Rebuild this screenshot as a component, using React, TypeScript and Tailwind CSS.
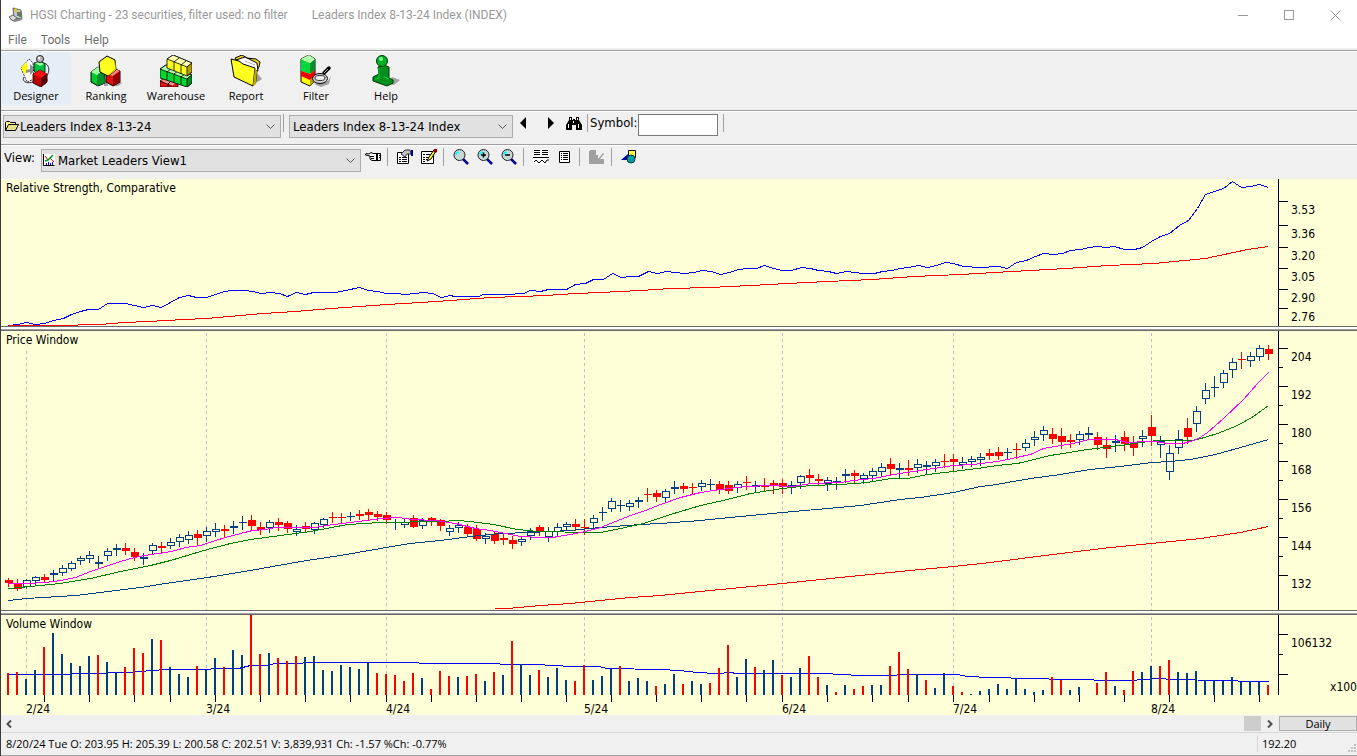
import type { ReactNode } from 'react';

type Candle = [high: number, top: number, bottom: number, low: number, color: 'r' | 'b'];
type Tick = { y: number; label?: string; short?: boolean };

const RED = '#ff0000';
const NAVY = '#004080';
const PAPER = '#ffffd7';

const PLOT_LEFT = 1;
const PLOT_WIDTH = 1277;

// candle n sits at x = 8 + 9n
const barX = (index: number) => 8 + index * 9;

const candles: Candle[] = [
  [578, 580, 583, 587, 'r'], [579, 584, 589, 591, 'r'], [579, 580, 587, 589, 'b'], [576, 577, 581, 585, 'b'],
  [574, 577, 580, 583, 'r'], [570, 573, 575, 582, 'b'], [565, 568, 573, 576, 'b'], [561, 563, 569, 571, 'b'],
  [556, 558, 561, 565, 'b'], [551, 555, 559, 563, 'b'], [556, 562, 564, 568, 'b'], [548, 551, 556, 561, 'b'],
  [544, 548, 550, 556, 'b'], [543, 548, 551, 555, 'r'], [548, 552, 557, 561, 'r'], [553, 557, 559, 565, 'b'],
  [543, 545, 551, 555, 'b'], [542, 546, 548, 554, 'r'], [538, 542, 546, 549, 'b'], [534, 537, 542, 547, 'b'],
  [531, 535, 540, 544, 'b'], [530, 534, 538, 545, 'r'], [527, 531, 536, 542, 'b'], [523, 529, 532, 537, 'b'],
  [525, 529, 531, 537, 'r'], [521, 526, 528, 534, 'b'], [516, 522, 523, 530, 'b'], [515, 520, 526, 530, 'r'],
  [522, 527, 530, 535, 'r'], [520, 522, 528, 533, 'b'], [518, 522, 525, 531, 'r'], [521, 523, 529, 533, 'r'],
  [525, 529, 532, 536, 'b'], [522, 526, 529, 533, 'r'], [522, 523, 530, 534, 'b'], [518, 519, 525, 528, 'b'],
  [512, 517, 518, 523, 'r'], [513, 517, 518, 523, 'r'], [512, 516, 517, 521, 'b'], [510, 514, 516, 520, 'r'],
  [509, 512, 515, 520, 'r'], [511, 514, 517, 521, 'r'], [512, 515, 520, 524, 'r'], [519, 522, 523, 530, 'b'],
  [519, 522, 525, 528, 'b'], [515, 518, 527, 528, 'r'], [518, 520, 526, 529, 'b'], [517, 518, 521, 526, 'r'],
  [519, 520, 526, 531, 'r'], [525, 528, 532, 536, 'b'], [522, 525, 528, 533, 'b'], [524, 527, 534, 537, 'r'],
  [525, 529, 539, 541, 'r'], [533, 536, 539, 544, 'b'], [532, 534, 541, 544, 'r'], [533, 538, 540, 545, 'r'],
  [536, 540, 544, 549, 'r'], [536, 539, 542, 546, 'b'], [528, 531, 536, 540, 'b'], [525, 527, 531, 536, 'r'],
  [527, 531, 537, 542, 'b'], [523, 527, 532, 536, 'b'], [522, 524, 527, 531, 'b'], [519, 524, 527, 531, 'r'],
  [519, 527, 528, 535, 'r'], [515, 518, 523, 529, 'b'], [507, 512, 513, 521, 'b'], [498, 501, 509, 512, 'b'],
  [500, 505, 506, 512, 'b'], [500, 503, 507, 511, 'b'], [497, 500, 502, 508, 'b'], [488, 494, 495, 502, 'r'],
  [490, 493, 497, 502, 'r'], [489, 491, 498, 502, 'b'], [481, 487, 489, 494, 'b'], [483, 486, 489, 493, 'r'],
  [483, 487, 488, 494, 'r'], [480, 483, 487, 491, 'b'], [479, 484, 485, 490, 'b'], [481, 484, 490, 494, 'r'],
  [481, 485, 491, 494, 'r'], [481, 484, 488, 493, 'b'], [476, 482, 483, 490, 'r'], [481, 485, 487, 492, 'b'],
  [478, 486, 487, 492, 'r'], [480, 483, 486, 494, 'r'], [479, 483, 487, 494, 'r'], [481, 485, 487, 494, 'b'],
  [475, 476, 483, 489, 'b'], [469, 475, 478, 483, 'r'], [474, 479, 481, 486, 'r'], [477, 480, 484, 491, 'b'],
  [477, 481, 482, 490, 'b'], [469, 474, 476, 483, 'b'], [470, 473, 476, 483, 'r'], [473, 475, 479, 484, 'b'],
  [468, 471, 476, 482, 'b'], [463, 467, 472, 476, 'b'], [458, 464, 469, 475, 'r'], [463, 468, 470, 478, 'b'],
  [460, 468, 470, 476, 'r'], [459, 464, 468, 473, 'b'], [461, 465, 467, 474, 'b'], [459, 462, 466, 472, 'b'],
  [454, 461, 462, 468, 'r'], [454, 459, 462, 472, 'r'], [457, 462, 465, 469, 'b'], [456, 459, 462, 467, 'b'],
  [453, 457, 460, 466, 'b'], [449, 453, 456, 460, 'r'], [447, 452, 456, 460, 'r'], [448, 452, 453, 460, 'b'],
  [443, 449, 450, 459, 'r'], [439, 443, 448, 451, 'b'], [431, 437, 440, 446, 'b'], [426, 430, 435, 441, 'b'],
  [428, 434, 439, 444, 'r'], [428, 436, 442, 449, 'r'], [434, 440, 442, 448, 'r'], [431, 434, 440, 445, 'b'],
  [427, 433, 435, 439, 'b'], [432, 437, 445, 450, 'r'], [437, 445, 449, 458, 'r'], [435, 441, 443, 452, 'b'],
  [431, 437, 444, 451, 'r'], [436, 443, 448, 456, 'r'], [430, 436, 439, 447, 'b'], [415, 427, 436, 446, 'r'],
  [436, 441, 445, 458, 'b'], [445, 453, 472, 480, 'b'], [430, 439, 448, 454, 'b'], [418, 428, 437, 444, 'r'],
  [406, 411, 424, 432, 'b'], [383, 390, 399, 404, 'b'], [376, 387, 388, 397, 'b'], [370, 373, 383, 388, 'b'],
  [358, 362, 370, 378, 'b'], [352, 359, 360, 369, 'r'], [352, 356, 361, 367, 'b'], [345, 348, 357, 361, 'b'],
  [345, 349, 354, 360, 'r'],
];

const volumeTops = [
  673, 672, 679, 670, 647, 631, 654, 663, 666, 656, 655, 662, 672, 667, 648, 653, 639, 640, 667, 674,
  677, 666, 670, 658, 667, 650, 655, 615, 654, 653, 658, 661, 656, 657, 656, 670, 671, 665, 667, 669,
  663, 673, 674, 675, 681, 673, 678, 689, 671, 676, 677, 676, 674, 681, 672, 675, 641, 664, 675, 670,
  677, 668, 680, 681, 665, 680, 676, 669, 666, 681, 678, 681, 686, 684, 674, 684, 681, 684, 683, 668,
  645, 677, 659, 667, 670, 660, 675, 677, 668, 656, 677, 685, 692, 685, 689, 686, 685, 685, 666, 652,
  669, 674, 680, 688, 673, 686, 692, 694, 691, 689, 684, 689, 678, 689, 692, 690, 677, 680, 690, 687,
  695, 683, 672, 686, 690, 671, 672, 666, 666, 660, 672, 673, 671, 680, 680, 681, 677, 682, 681, 682,
  685,
];

// one letter per volume bar: r = down day, b = up day
const volumeColors =
  'rrbbrbbbbbrbbrrrbrbb' +
  'brbbrbbrrbrrrbbbbbbb' +
  'brrrrrbrrrbrrbrbrbbr' +
  'bbbrrbbbrbbbrbbrbbrr' +
  'rbbrbbrbbrrbrbrrbbrr' +
  'rbrbbrrbbbbbbbbbrrbb' +
  'brrbrrbbrrbbbbbbbbbb' +
  'r';

const strengthLine =
  '8,325 17,324 26,322 35,324 44,323 53,320 63,318 71,314 80,311 88,309 98,309 107,303 125,303 134,305 143,307 152,305 161,307 170,302 179,297 188,295 196,297 206,297 215,294 224,291 231,290 245,290 252,291 261,293 270,292 279,293 287,296 296,292 305,294 313,292 335,292 345,290 359,287 368,290 377,291 386,293 395,293 405,294 414,293 423,292 432,293 441,297 450,295 454,296 478,296 483,294 507,294 523,293 530,290 540,291 548,289 566,289 575,284 585,283 593,279 603,279 612,273 621,277 630,276 638,276 648,271 657,273 666,271 675,272 684,273 693,272 702,270 711,271 720,274 729,272 738,269 747,268 756,268 764,265 773,268 782,270 791,270 801,267 810,268 818,270 828,271 836,273 846,271 855,272 862,273 874,273 882,271 891,270 900,268 908,267 918,265 927,267 936,265 945,262 953,263 963,266 980,267 998,266 1007,268 1016,262 1026,260 1035,256 1043,253 1053,254 1062,253 1070,250 1080,249 1089,247 1097,246 1106,247 1114,246 1124,249 1134,249 1142,247 1151,241 1160,236 1169,233 1179,225 1188,220 1197,208 1205,194 1214,191 1223,188 1232,181 1241,187 1250,186 1259,184 1268,187';
const strengthAverage =
  '8,325 56,325 100,324 124,322 148,321 184,319 206,318 240,315 262,313 295,311 330,308 359,306 386,304 420,302 450,300 490,297 520,296 545,295 575,293 600,292 640,290 670,288 710,287 750,285 787,283 827,281 872,279 900,277 913,276 960,274 1011,271 1066,268 1108,265 1153,263 1205,258 1233,252 1247,249 1268,246';
const fastAverage =
  '8,583 26,583 45,582 60,580 75,577 90,571 105,566 120,561 134,557 150,554 165,552 175,550 185,547 200,545 215,540 225,537 240,533 252,530 265,529 275,527 315,527 325,525 342,523 366,520 380,518 398,517 412,519 435,520 455,523 475,528 490,530 505,533 520,536 540,537 552,537 570,534 585,531 600,527 615,521 630,515 645,510 660,504 680,497 700,492 720,489 745,486 770,485 793,486 810,483 840,482 853,480 873,478 893,474 913,471 933,468 953,465 973,464 997,461 1007,459 1030,454 1043,448 1060,445 1073,443 1088,439 1115,439 1127,442 1147,441 1155,441 1167,443 1182,443 1190,441 1198,438 1207,432 1223,418 1243,399 1257,383 1268,372';
const mediumAverage =
  '8,588 30,586 60,583 90,578 120,571 150,565 170,560 190,554 207,549 230,543 250,539 280,535 310,531 347,524 380,522 440,521 457,520 470,521 493,524 517,529 537,531 590,532 600,532 620,528 643,523 670,514 700,505 727,499 750,493 782,488 810,485 840,484 867,482 890,478 907,478 927,474 953,471 977,468 997,465 1017,463 1050,455 1087,449 1120,445 1140,442 1157,440 1190,440 1197,439 1217,433 1237,425 1253,416 1268,405';
const slowAverage =
  '8,600 26,598 75,595 100,592 140,587 165,583 207,577 250,570 300,561 340,555 380,548 410,543 440,540 470,536 500,533 530,532 570,530 600,527 640,524 660,523 700,520 740,516 782,512 827,508 860,505 880,502 900,499 920,497 953,492 980,486 990,485 1030,478 1060,474 1090,469 1120,466 1151,462 1170,461 1190,459 1215,454 1240,447 1268,439';
const longAverage =
  '494,608 507,608 540,605 570,603 590,601 630,597 660,595 720,589 782,583 830,578 880,573 920,569 953,566 990,562 1060,553 1110,547 1151,543 1200,538 1240,532 1268,526';
const volumeAverage =
  '8,674 58,674 85,673 130,672 139,671 165,669 210,669 211,668 238,668 250,665 265,665 275,663 300,663 305,662 418,662 419,663 499,663 500,664 535,664 571,666 598,666 607,668 660,669 679,670 697,672 715,673 733,672 733,673 823,673 859,675 895,675 898,674 957,674 967,676 990,677 1030,678 1066,679 1120,680 1130,680 1156,678 1174,679 1219,680 1255,681 1268,681';

const months = [
  { x: 26, label: '2/24' },
  { x: 206, label: '3/24' },
  { x: 386, label: '4/24' },
  { x: 584, label: '5/24' },
  { x: 782, label: '6/24' },
  { x: 953, label: '7/24' },
  { x: 1151, label: '8/24' },
];

const weekTicks = [
  44, 89, 134, 170, 215, 260, 305, 350, 386, 431, 476, 521, 566, 611, 656, 701, 746, 782, 827, 872, 908, 953, 989,
  1034, 1079, 1124, 1169, 1214, 1259,
];

const strengthTicks: Tick[] = [
  { y: 201, label: '3.53' },
  { y: 225, label: '3.36' },
  { y: 247, label: '3.20' },
  { y: 268, label: '3.05' },
  { y: 289, label: '2.90' },
  { y: 308, label: '2.76' },
];

const priceTicks: Tick[] = [
  { y: 348, label: '204' },
  { y: 367, short: true },
  { y: 386, label: '192' },
  { y: 405, short: true },
  { y: 424, label: '180' },
  { y: 443, short: true },
  { y: 461, label: '168' },
  { y: 480, short: true },
  { y: 499, label: '156' },
  { y: 518, short: true },
  { y: 537, label: '144' },
  { y: 556, short: true },
  { y: 575, label: '132' },
];

const volumeTicks: Tick[] = [{ y: 634, label: '106132' }, { y: 654, short: true }, { y: 674 }];

const Series = ({ points, color }: { points: string; color: string }) => (
  <polyline points={points} fill="none" stroke={color} strokeWidth="1" />
);

const MonthLines = ({ from, to }: { from: number; to: number }) => (
  <>
    {months.map(({ x }) => (
      <line key={x} x1={x} x2={x} y1={from} y2={to} stroke="#c0c0c0" strokeDasharray="3 3" />
    ))}
  </>
);

interface PaneProps {
  title: string;
  top: number;
  height: number;
  axisEnd: number;
  ticks: Tick[];
  className: string;
  children: ReactNode;
  overlay?: ReactNode;
  axisNote?: ReactNode;
}

const Pane = ({ title, top, height, axisEnd, ticks, className, children, overlay, axisNote }: PaneProps) => (
  <section className={`relative flex min-h-0 bg-[#ffffd7] text-xs ${className}`}>
    <div className="relative min-w-0 flex-1">
      <svg
        className="block h-full w-full"
        viewBox={`${PLOT_LEFT} ${top} ${PLOT_WIDTH} ${height}`}
        preserveAspectRatio="none"
        shapeRendering="crispEdges"
      >
        <g transform="translate(0.5 0.5)">{children}</g>
      </svg>
      <h2 className="absolute top-0 left-1 bg-[#ffffd7] px-px leading-[18px]">{title}</h2>
      {overlay}
    </div>
    <div className="relative w-[79px] shrink-0">
      <svg
        className="block h-full w-full"
        viewBox={`0 ${top} 79 ${height}`}
        preserveAspectRatio="none"
        shapeRendering="crispEdges"
      >
        <g transform="translate(0.5 0.5)" stroke="#000">
          <line x1="0" x2="0" y1={top - 1} y2={axisEnd} />
          {ticks.map(({ y, short }) => (
            <line key={y} x1="0" x2={short ? 4 : 9} y1={y} y2={y} />
          ))}
        </g>
      </svg>
      {ticks.map(
        ({ y, label }) =>
          label && (
            <span
              key={y}
              className="absolute left-[13px] -translate-y-1/2 leading-4"
              style={{ top: `${((y + 9 - top) / height) * 100}%` }}
            >
              {label}
            </span>
          ),
      )}
      {axisNote}
    </div>
  </section>
);

const Splitter = () => (
  <div className="flex h-[5px] shrink-0 cursor-row-resize flex-col">
    <div className="h-px bg-[#696969]" />
    <div className="h-0.5 bg-white" />
    <div className="h-px bg-[#a0a0a0]" />
    <div className="h-px bg-[#696969]" />
  </div>
);

const Candlestick = ({ x, candle }: { x: number; candle: Candle }) => {
  const [high, top, bottom, low, color] = candle;
  const stroke = color === 'r' ? RED : NAVY;
  const height = bottom - top - 1;

  return (
    <g stroke={stroke}>
      <line x1={x} x2={x} y1={high - 0.5} y2={low - 0.5} />
      {height > 0 ? (
        <rect x={x - 3} y={top} width="7" height={height} fill={color === 'r' ? RED : PAPER} />
      ) : (
        <line x1={x - 3.5} x2={x + 4.5} y1={top} y2={top} />
      )}
    </g>
  );
};

const DesignerIcon = () => (
  <svg width="32" height="32" viewBox="0 0 32 32">
    <path d="M24 29l4-6v3l-3 4z" fill="#a0a0a0" />
    <path d="M1 13l8-9 4 4 1 16-7 3z" fill="#fff" stroke="#000" strokeWidth="0.800" strokeDasharray="2 1" />
    <path d="M1 13l5-6 2 5-3 8z" fill="#ffff00" />
    <path d="M6 15l4-1V9l3 3v5l-3 3v-3l-4 1z" fill="#909090" />
    <path d="M23 8c6 0 8 8 3 14M4 22c-3 5 4 7 9 5" fill="none" stroke="#333" />
    <path d="M14 8l6-2 5 3v8l-6 3-5-4z" fill="#00c040" stroke="#000" strokeWidth="0.800" />
    <path d="M15 8l5-1 4 2-4 2z" fill="#a0ffa0" />
    <circle cx="20" cy="4" r="3.500" fill="#b8b8b8" stroke="#222" />
    <circle cx="19" cy="3" r="1.200" fill="#fff" />
    <path d="M13 19l7-4 7 4v8l-6 5-8-4z" fill="#c00000" stroke="#000" strokeWidth="0.800" />
    <path d="M13 19l7-4 7 4-6 4z" fill="#ff1010" />
    <path d="M21 23v9l6-5v-8z" fill="#600000" />
  </svg>
);

const RankingIcon = () => (
  <svg width="32" height="32" viewBox="0 0 32 32">
    <path d="M14 28l3-3 1 6h-4zM29 26l3 2-4 3h-5z" fill="#a0a0a0" />
    <path d="M1 17l7-5 6 3 1 13-7 3-7-4z" fill="#00c832" stroke="#000" />
    <path d="M1 17l7-5 6 3-7 5z" fill="#a0ffa0" />
    <path d="M7 20v11l8-3-1-13z" fill="#009028" />
    <path d="M16 19l7-6 7 3v11l-7 4-7-4z" fill="#e01010" stroke="#000" />
    <path d="M16 19l7-6 7 3-7 5z" fill="#ff8080" />
    <path d="M23 21v10l7-4V16z" fill="#900000" />
    <path d="M9 7l8-6 8 4 1 10-8 6-8-4z" fill="#ffff20" stroke="#000" />
    <path d="M25 5l1 10-8 6 2-3 5-4z" fill="#d8c800" />
  </svg>
);

const WarehouseIcon = () => (
  <svg width="32" height="32" viewBox="0 0 32 32" stroke="#000" strokeWidth="0.800" strokeLinejoin="round">
    <path d="M0 26l6-4 12 5v5H0z" fill="#f01010" />
    <path d="M1 26l5-4 11 5-5 4z" fill="#ff9090" stroke="none" />
    <path d="M0 26l12 5M8 29v3M8 29l4-4" fill="none" />
    <path d="M0 14l6-4 26 10v8l-5 4-27-9z" fill="#00d830" />
    <path d="M0 14l6-4 26 10-5 4z" fill="#b0ffb0" />
    <path d="M27 24l5-4v8l-5 4z" fill="#009020" />
    <path d="M7 17v8M14 19v9M21 22v8M7 17l5-4M14 19l5-4M21 22l5-4" />
    <path d="M7 4l6-4 19 8v9l-5 4-20-8z" fill="#ffff20" />
    <path d="M7 4l6-4 19 8-5 4z" fill="#ffffb0" />
    <path d="M27 12l5-4v9l-5 4z" fill="#b8a000" />
    <path d="M14 7v9M21 10v9M14 7l5-4M21 10l5-4" />
  </svg>
);

const ReportIcon = () => (
  <svg width="32" height="32" viewBox="0 0 32 32">
    <path d="M26 17l6 7-6 4z" fill="#a0a0a0" />
    <path d="M5 3l7-3 5 3 9 1 4 3-1 5-2 3-1 11-4 5z" fill="#f0d818" stroke="#000" />
    <path d="M6 5l9-3 12 6 1 8-19-5z" fill="#fff" stroke="#000" />
    <path d="M15 6l10 4" stroke="#b0b0b0" />
    <path d="M1 4l3 18 19 9 2-18-12-4-4-3z" fill="#ffff20" stroke="#000" />
    <path d="M23 31l2-18 2 3-1 13z" fill="#c0a800" />
  </svg>
);

const FilterIcon = () => (
  <svg width="32" height="32" viewBox="0 0 32 32">
    <path d="M14 29l14-3 3-5-2 8-8 3z" fill="#a0a0a0" />
    <path d="M1 4l8-4 6 4v22l-5 5-9-4z" fill="#ffff00" stroke="#000" />
    <path d="M1 4l9 4v11l-9-3z" fill="#00d840" />
    <path d="M10 8l5-4v11l-5 4z" fill="#009028" />
    <path d="M1 4l8-4 6 4-5 4z" fill="#b0ffb0" />
    <path d="M1 16l9 3 5-4v6l-5 4-9-4z" fill="#f00000" />
    <path d="M10 25l5-4v5l-5 5z" fill="#b8a000" />
    <path d="M24 18l5-5" stroke="#000" strokeWidth="3.500" strokeLinecap="round" />
    <path d="M24 18l4-4" stroke="#b0b0b0" strokeWidth="1" />
    <ellipse cx="20" cy="23.500" rx="7.500" ry="5" fill="#d0d0d0" stroke="#000" />
    <ellipse cx="20" cy="23" rx="5" ry="2.500" fill="#f0f0f0" stroke="#333" />
  </svg>
);

const HelpIcon = () => (
  <svg width="32" height="32" viewBox="0 0 32 32">
    <path d="M18 29l4-7 8 3-6 5z" fill="#a0a0a0" />
    <path d="M8 12l6-2 5 2v11l4 2v3l-6 3-14-5v-4l6-3z" fill="#009020" stroke="#003800" />
    <path d="M9 13v10l-4 1M14 22l5 2" fill="none" stroke="#00d838" />
    <circle cx="12" cy="6" r="5.500" fill="#00b028" stroke="#003800" />
    <circle cx="11" cy="4" r="2" fill="#80ff90" />
  </svg>
);

const tools = [
  { label: 'Designer', icon: <DesignerIcon />, active: true },
  { label: 'Ranking', icon: <RankingIcon /> },
  { label: 'Warehouse', icon: <WarehouseIcon /> },
  { label: 'Report', icon: <ReportIcon /> },
  { label: 'Filter', icon: <FilterIcon /> },
  { label: 'Help', icon: <HelpIcon /> },
];

const AppIcon = () => (
  <svg width="16" height="16" viewBox="0 0 16 16">
    <path d="M1 12l6 3 7-2-5-3z" fill="#888" />
    <path d="M5 1l8 2 1 9-8-1z" fill="#c8c8c8" stroke="#666" />
    <path d="M6 3l2-3 1 6z" fill="#d8c800" />
    <path d="M9 5h4v4H9z" fill="#707070" />
    <path d="M1 10l4-2 4 3-4 3z" fill="#ddd" stroke="#666" />
    <path d="M11 8h2v2h-2z" fill="#20a040" />
  </svg>
);

const FolderIcon = () => (
  <svg width="14" height="12" viewBox="0 0 14 12">
    <path d="M.5 10.500V2.500l1-1h3l1 1h5v2" fill="#ffffa0" stroke="#000" />
    <path d="M.5 10.500l3-6h10l-3 6z" fill="#e8e088" stroke="#000" />
  </svg>
);

const ViewIcon = () => (
  <svg width="12" height="12" viewBox="0 0 12 12">
    <path d="M1 0h11v11H1z" fill="#fff" />
    <path d="M.5 0v11.500h11" fill="none" stroke="#000" />
    <path d="M2 2l3 4 2-2 4 4" fill="none" stroke="#e00000" />
    <path d="M2 7l3-1 5-5" fill="none" stroke="#00a020" strokeWidth="1.500" />
    <path d="M3.500 11V9M5.500 11V8M7.500 11V9M9.500 11V8" stroke="#0000d0" />
  </svg>
);

const HandIcon = () => (
  <svg width="16" height="12" viewBox="0 0 16 12">
    <path d="M11 2.500H8l-2-1-2 1.500L1 2.500.5 4 5 5v3l2 1.500h4" fill="#fff" stroke="#000" />
    <path d="M5 5.500h4M6 7.500h3" stroke="#000" />
    <path d="M11 2h2v8h-2z" fill="#000" />
    <path d="M13 2.500h2.500v7H13" fill="#fff" stroke="#000" />
    <path d="M14.500 4v4" stroke="#000" strokeDasharray="1 1" />
  </svg>
);

const PropertiesIcon = () => (
  <svg width="16" height="16" viewBox="0 0 16 16">
    <path d="M.5 3.500h11v11H.5z" fill="#fff" stroke="#000" />
    <path d="M2 8.500h2M5 8.500h5M2 10.500h2M5 10.500h5M2 12.500h2M5 12.500h5" stroke="#000" />
    <path d="M4 5l4-4h5l1 4h-4L8 8z" fill="#c0c0c0" stroke="#333" />
    <path d="M14 1h2v6h-2z" fill="#000090" />
  </svg>
);

const NotesIcon = () => (
  <svg width="16" height="16" viewBox="0 0 16 16">
    <path d="M.5 2.500h12v12H.5z" fill="#fff" stroke="#000" />
    <path d="M2 5.500h2M5 5.500h5M2 8.500h2M5 8.500h4M2 10.500h2M5 10.500h3M2 12.500h2" stroke="#000" />
    <path d="M6 12l2-4 5-7 2 1-5 8z" fill="#ffff00" stroke="#000" />
    <path d="M12 2l1-2h3v3l-2 1z" fill="#900000" />
  </svg>
);

const MagnifierIcon = ({ sign }: { sign?: 'plus' | 'minus' }) => (
  <svg width="16" height="16" viewBox="0 0 16 16">
    <path d="M10 10l5 5" stroke="#000090" strokeWidth="2.500" />
    <circle cx="6.500" cy="6" r="5.500" fill="#c8d8d8" stroke="#222" />
    <path d="M3 6c0-2 1-3 3-3" fill="none" stroke="#00ffff" strokeWidth="1.500" />
    {sign && <path d="M4 6h5" stroke="#000" strokeWidth="1.500" />}
    {sign === 'plus' && <path d="M6.500 3.500v5" stroke="#000" strokeWidth="1.500" />}
  </svg>
);

const PanesIcon = () => (
  <svg width="16" height="16" viewBox="0 0 16 16">
    <path d="M0 0h16v16H0z" fill="#fff" />
    <path d="M1 1.500h6M9 1.500h6M1 3.500h6M9 3.500h6M1 5.500h6M9 5.500h6M0 8.500h16" stroke="#000" />
    <path d="M1 13l2-2 3 3 3-3 3 3 2-3h2" fill="none" stroke="#000" />
  </svg>
);

const ListIcon = () => (
  <svg width="12" height="12" viewBox="0 0 12 12">
    <path d="M.5.5h10v11H.5z" fill="#fff" stroke="#000" />
    <path d="M2 2.500h1M4 2.500h5M2 4.500h1M4 4.500h5M2 6.500h1M4 6.500h5M2 8.500h1M4 8.500h5" stroke="#000" />
  </svg>
);

const ExportIcon = () => (
  <svg width="16" height="16" viewBox="0 0 16 16">
    <path d="M0 15V2h1V1h6v5h2v4l5-6 1 1-4 5h4v5z" fill="#a0a0a0" />
  </svg>
);

const ShapesIcon = () => (
  <svg width="16" height="14" viewBox="0 0 16 14">
    <path d="M7.500.5h7v7h-7z" fill="#ffff40" stroke="#000" />
    <path d="M0 10l7-6v6z" fill="#0000a0" />
    <circle cx="10" cy="9" r="4" fill="#00a0a0" stroke="#004040" />
  </svg>
);

const BinocularsIcon = () => (
  <svg width="16" height="14" viewBox="0 0 16 14">
    <path d="M3 1h3v3h1V3h2v1h1V1h3v3l3 5v5h-6V9H6v5H0V9l3-5z" fill="#000" />
    <path d="M4.500 2v2M11.500 2v2M2.500 8v4M12.500 8v4M7.500 5v2" stroke="#fff" />
  </svg>
);

const Divider = () => <div className="h-[18px] w-px shrink-0 bg-[#a0a0a0]" />;

interface ComboProps {
  id: string;
  label: string;
  value: string;
  className: string;
  icon?: ReactNode;
}

const Combo = ({ id, label, value, className, icon }: ComboProps) => (
  <div className={`relative h-[23px] ${className}`}>
    <select
      id={id}
      aria-label={label}
      className={`h-full w-full appearance-none border border-[#adadad] bg-[#e1e1e1] text-[13px] outline-none ${icon ? 'pl-4' : 'pl-[3px]'}`}
    >
      <option>{value}</option>
    </select>
    {icon && <span className="pointer-events-none absolute top-1.5 left-0.5">{icon}</span>}
    <svg className="pointer-events-none absolute top-2.5 right-1.5" width="9" height="6" viewBox="0 0 9 6">
      <path d="M.5.5l4 4 4-4" fill="none" stroke="#555" />
    </svg>
  </div>
);

const IconButton = ({ label, children }: { label: string; children: ReactNode }) => (
  <button type="button" aria-label={label} className="flex h-4 w-4 shrink-0 items-center justify-center">
    {children}
  </button>
);

const TitleBar = () => (
  <header className="flex h-[30px] shrink-0 items-center bg-white pl-[7px] font-[Roboto,sans-serif] text-xs text-[#999999]">
    <AppIcon />
    <h1 className="ml-1.5">HGSI Charting - 23 securities, filter used: no filter</h1>
    <span className="ml-6">Leaders Index 8-13-24 Index (INDEX)</span>
    <div className="mr-4 ml-auto flex gap-[35px]">
      <button type="button" aria-label="Minimize">
        <svg width="11" height="11" shapeRendering="crispEdges">
          <path d="M0 5.500h10" stroke="#999" />
        </svg>
      </button>
      <button type="button" aria-label="Maximize">
        <svg width="11" height="11" shapeRendering="crispEdges">
          <path d="M.5.5h9v9h-9z" fill="none" stroke="#999" />
        </svg>
      </button>
      <button type="button" aria-label="Close">
        <svg width="11" height="11">
          <path d="M.5.5l10 10M10.500.5l-10 10" stroke="#999" />
        </svg>
      </button>
    </div>
  </header>
);

const App = () => {
  return (
    <div className="flex h-screen min-h-[560px] flex-col border-l border-[#3c3c3c] bg-[#f0f0f0] font-['DejaVu_Sans_Condensed','Noto_Sans',sans-serif] text-black">
      <TitleBar />

      <nav className="flex h-5 shrink-0 items-center gap-3.5 border-b-2 border-[#f0f0f0] bg-white pt-0.5 pl-[7px] font-[Roboto,sans-serif] text-xs text-[#6d6d6d]">
        <a href="#file">File</a>
        <a href="#tools">Tools</a>
        <a href="#help">Help</a>
      </nav>

      <div className="flex h-[60px] shrink-0 border-t border-[#a0a0a0] shadow-[inset_0_1px_0_#fff]">
        {tools.map(({ label, icon, active }) => (
          <button
            key={label}
            type="button"
            className={`mt-px flex h-[53px] w-[70px] flex-col items-center pt-[3px] font-['Open_Sans',sans-serif] text-[11px] ${active ? 'bg-[#e5eef6]' : ''}`}
          >
            {icon}
            <span className="leading-[18px]">{label}</span>
          </button>
        ))}
      </div>

      <div className="flex h-[34px] shrink-0 items-start border-t border-[#a0a0a0] pt-[3px] shadow-[inset_0_1px_0_#fff]">
        <Combo
          id="group"
          label="Group"
          value="Leaders Index 8-13-24"
          className="mr-0.5 ml-0.5 w-[278px]"
          icon={<FolderIcon />}
        />
        <Divider />
        <Combo id="security" label="Security" value="Leaders Index 8-13-24 Index" className="ml-[5px] w-[224px]" />
        <div className="flex h-[18px] items-center">
          <button type="button" aria-label="Previous" className="ml-[7px]">
            <svg width="6" height="12">
              <path d="M6 0v12L0 6z" />
            </svg>
          </button>
          <button type="button" aria-label="Next" className="mr-3 ml-[22px]">
            <svg width="6" height="12">
              <path d="M0 0v12l6-6z" />
            </svg>
          </button>
          <IconButton label="Find">
            <BinocularsIcon />
          </IconButton>
          <div className="ml-[5px]">
            <Divider />
          </div>
          <label htmlFor="symbol" className="ml-0.5 text-[13px]">
            Symbol:
          </label>
        </div>
        <input id="symbol" type="text" className="mr-[5px] h-[22px] w-20 border border-[#7a7a7a] bg-white px-1 text-[13px]" />
        <Divider />
      </div>

      <div className="flex h-[35px] shrink-0 items-start border-t border-[#a0a0a0] pt-[3px] shadow-[inset_0_1px_0_#fff]">
        <label htmlFor="view" className="ml-[3px] w-9 shrink-0 text-[13px] leading-5">
          View:
        </label>
        <Combo id="view" label="View" value="Market Leaders View1" className="ml-px w-[320px]" icon={<ViewIcon />} />
        <div className="ml-1 flex h-[18px] items-center gap-1.5">
          <IconButton label="Point">
            <HandIcon />
          </IconButton>
          <Divider />
          <div className="ml-[3px] flex gap-2">
            <IconButton label="Properties">
              <PropertiesIcon />
            </IconButton>
            <IconButton label="Notes">
              <NotesIcon />
            </IconButton>
          </div>
          <Divider />
          <div className="ml-[3px] flex gap-2">
            <IconButton label="Zoom">
              <MagnifierIcon />
            </IconButton>
            <IconButton label="Zoom in">
              <MagnifierIcon sign="plus" />
            </IconButton>
            <IconButton label="Zoom out">
              <MagnifierIcon sign="minus" />
            </IconButton>
          </div>
          <Divider />
          <div className="ml-[3px] flex gap-2">
            <IconButton label="Panes">
              <PanesIcon />
            </IconButton>
            <IconButton label="List">
              <ListIcon />
            </IconButton>
          </div>
          <Divider />
          <div className="ml-[3px]">
            <IconButton label="Export">
              <ExportIcon />
            </IconButton>
          </div>
          <Divider />
          <div className="ml-[3px]">
            <IconButton label="Drawing">
              <ShapesIcon />
            </IconButton>
          </div>
        </div>
      </div>

      <main className="flex min-h-0 flex-1 flex-col">
        <Pane
          title="Relative Strength, Comparative"
          top={179}
          height={147}
          axisEnd={326}
          ticks={strengthTicks}
          className="flex-[147_1_0%]"
        >
          <Series points={strengthLine} color="#0000ff" />
          <Series points={strengthAverage} color={RED} />
        </Pane>

        <Splitter />

        <Pane
          title="Price Window"
          top={331}
          height={279}
          axisEnd={610}
          ticks={priceTicks}
          className="flex-[279_1_0%]"
        >
          <MonthLines from={332} to={610} />
          {candles.map((candle, index) => (
            <Candlestick key={index} x={barX(index)} candle={candle} />
          ))}
          <Series points={longAverage} color={RED} />
          <Series points={slowAverage} color={NAVY} />
          <Series points={mediumAverage} color="#008000" />
          <Series points={fastAverage} color="#ff00ff" />
        </Pane>

        <Splitter />

        <Pane
          title="Volume Window"
          top={615}
          height={100}
          axisEnd={694}
          ticks={volumeTicks}
          className="flex-[100_1_0%]"
          overlay={months.map(({ x, label }) => (
            <span
              key={x}
              className="absolute bottom-0 leading-3"
              style={{ left: `${((x - PLOT_LEFT) / PLOT_WIDTH) * 100}%` }}
            >
              {label}
            </span>
          ))}
          axisNote={<span className="absolute right-0 bottom-5 leading-4">x100</span>}
        >
          <MonthLines from={616} to={694} />
          <Series points={volumeAverage} color="#0000ff" />
          {volumeTops.map((top, index) => (
            <rect
              key={index}
              x={barX(index) - 1.5}
              y={top - 0.5}
              width="2"
              height={695 - top}
              fill={volumeColors[index] === 'r' ? RED : NAVY}
            />
          ))}
          {weekTicks.map((x) => (
            <line key={x} x1={x} x2={x} y1="694.500" y2="701.500" stroke="#000" />
          ))}
        </Pane>
      </main>

      <div className="flex h-[17px] shrink-0 items-center">
        <button type="button" aria-label="Scroll left" className="ml-[5px]">
          <svg width="6" height="8" viewBox="0 0 6 8">
            <path d="M5 .5L1.500 4 5 7.500" fill="none" stroke="#505050" strokeWidth="2" />
          </svg>
        </button>
        <div className="flex h-[15px] flex-1 justify-end">
          <div className="w-[17px] bg-[#cdcdcd]" />
        </div>
        <button type="button" aria-label="Scroll right" className="mx-1.5">
          <svg width="6" height="8" viewBox="0 0 6 8">
            <path d="M1 .5L4.500 4 1 7.500" fill="none" stroke="#505050" strokeWidth="2" />
          </svg>
        </button>
        <button
          type="button"
          className="h-[15px] w-[78px] border border-[#adadad] bg-[#e1e1e1] font-['Open_Sans',sans-serif] text-[11px] leading-3"
        >
          Daily
        </button>
      </div>

      <footer className="relative flex h-6 shrink-0 items-center border-t border-b border-t-[#d7d7d7] border-b-[#a0a0a0] font-['Open_Sans',sans-serif] text-[11px]">
        <p className="flex-1 pl-[5px]">8/20/24 Tue O: 203.95 H: 205.39 L: 200.58 C: 202.51 V: 3,839,931 Ch: -1.57 %Ch: -0.77%</p>
        <p className="w-[100px] border-l border-[#d7d7d7] pl-1">192.20</p>
        <svg className="absolute right-0 bottom-0.5" width="9" height="9" fill="#bfbfbf">
          <path d="M6 0h2v2H6zM3 3h2v2H3zM6 3h2v2H6zM0 6h2v2H0zM3 6h2v2H3zM6 6h2v2H6z" />
        </svg>
      </footer>
    </div>
  );
};

export default App;
